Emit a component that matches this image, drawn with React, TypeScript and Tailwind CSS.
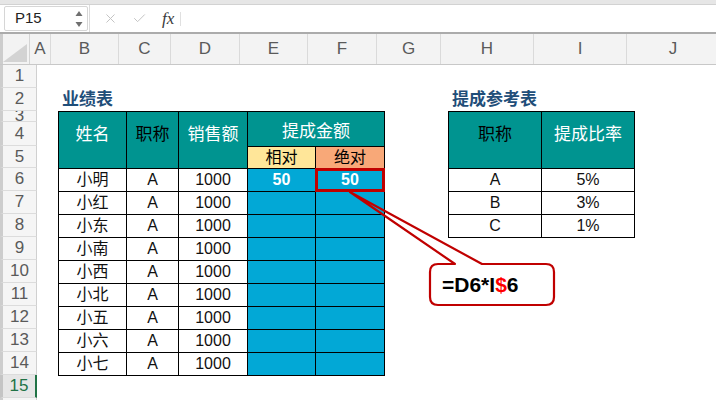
import { X, Check } from "lucide-react";
import { Fragment } from "react";

const font = { fontFamily: '"Liberation Sans", "Noto Sans CJK SC", sans-serif' };

const colHeads = [
  { label: "A", w: "w-[21px]" },
  { label: "B", w: "w-[68px]" },
  { label: "C", w: "w-[52px]" },
  { label: "D", w: "w-[69px]" },
  { label: "E", w: "w-[68px]" },
  { label: "F", w: "w-[69px]" },
  { label: "G", w: "w-[64px]" },
  { label: "H", w: "w-[93px]" },
  { label: "I", w: "w-[93px]" },
  { label: "J", w: "w-[93px]" },
];

const rowHeads = [
  { n: 1, h: "h-[23px]" },
  { n: 2, h: "h-[23px]" },
  { n: 3, h: "h-[11px]" },
  { n: 4, h: "h-[24px]" },
  { n: 5, h: "h-[22px]" },
  { n: 6, h: "h-[23px]" },
  { n: 7, h: "h-[23px]" },
  { n: 8, h: "h-[23px]" },
  { n: 9, h: "h-[23px]" },
  { n: 10, h: "h-[23px]" },
  { n: 11, h: "h-[23px]" },
  { n: 12, h: "h-[23px]" },
  { n: 13, h: "h-[23px]" },
  { n: 14, h: "h-[23px]" },
];

const names = ["小明", "小红", "小东", "小南", "小西", "小北", "小五", "小六", "小七"];

const rates = [
  { t: "A", r: "5%" },
  { t: "B", r: "3%" },
  { t: "C", r: "1%" },
];

export default function App() {
  return (
    <div className="relative w-[716px] h-[400px] overflow-hidden bg-white" style={font}>
      {/* ribbon edge */}
      <div className="h-[5px] bg-[#e6e6e6] border-b border-[#d2d2d2]"></div>

      {/* formula bar */}
      <div className="h-[27px] bg-white flex items-center">
        <div className="ml-[4px] w-[84px] h-[25px] border border-[#d6d6d6] rounded-[2px] flex items-center justify-between pl-[10px] pr-[4px]">
          <span className="text-[15px] text-[#222]">P15</span>
          <svg width="8" height="18" viewBox="0 0 8 18">
            <polygon points="4,1 7.5,6 0.5,6" fill="#6f6f6f" />
            <polygon points="0.5,12 7.5,12 4,17" fill="#6f6f6f" />
          </svg>
        </div>
        <div className="w-px h-[27px] bg-[#dcdcdc] ml-[1px]"></div>
        <X className="ml-[13px] w-[15px] h-[15px] text-[#c4c4c4]" strokeWidth={1.6} />
        <Check className="ml-[14px] w-[15px] h-[15px] text-[#c4c4c4]" strokeWidth={1.6} />
        <span
          className="ml-[15px] text-[17px] italic text-[#3a3a3a]"
          style={{ fontFamily: '"Liberation Serif", serif' }}
        >
          fx
        </span>
        <div className="ml-[6px] w-px h-[14px] bg-[#e0e0e0]"></div>
      </div>
      <div className="h-[2px] bg-[#ababab]"></div>

      {/* column headers */}
      <div className="flex h-[31px] bg-[#f3f3f3] border-b border-[#c8c8c8]">
        <div className="w-[37px] h-full border-r border-[#d4d4d4] border-l-[3px] border-l-[#cdcdcd] flex items-end justify-end pb-[2px] pr-[2px]">
          <svg width="24" height="18" viewBox="0 0 24 18">
            <polygon points="24,0 24,18 0,18" fill="#d3d3d3" />
          </svg>
        </div>
        {colHeads.map((c) => (
          <div
            key={c.label}
            className={`${c.w} shrink-0 h-full border-r border-[#dadada] flex items-center justify-center text-[17px] text-[#5a5a5a]`}
          >
            {c.label}
          </div>
        ))}
      </div>

      {/* body */}
      <div className="flex">
        <div className="w-[37px] shrink-0 flex flex-col bg-[#f5f5f5]">
          {rowHeads.map((r) => (
            <div
              key={r.n}
              className={`${r.h} overflow-hidden border-b border-[#dcdcdc] border-r border-r-[#d0d0d0] border-l-[3px] border-l-[#cdcdcd] flex items-center justify-center text-[17px] text-[#5a5a5a]`}
            >
              {r.n}
            </div>
          ))}
          <div className="h-[23px] border-b border-[#dcdcdc] border-r-2 border-r-[#217346] border-l-[3px] border-l-[#c4c4c4] bg-[#e6e6e6] flex items-center justify-center text-[17px] text-[#217346]">
            15
          </div>
          <div className="h-[23px] border-r border-r-[#d0d0d0] border-l-[3px] border-l-[#cdcdcd]"></div>
        </div>

        <div className="flex-1 flex flex-col pl-[21px]">
          <div className="h-[23px]"></div>
          <div className="h-[23px] flex items-center text-[17px] font-bold text-[#1f4e79]">
            <div className="w-[390px] pl-[4px]">业绩表</div>
            <div className="pl-[4px]">提成参考表</div>
          </div>

          <div className="flex items-start">
            {/* performance table */}
            <div className="grid grid-cols-[67px_51px_68px_67px_68px] grid-rows-[10px_23px_21px_repeat(9,22px)] gap-px p-px bg-black w-[327px] text-[16px]">
              <div className="row-span-3 bg-[#009490] text-white text-[17px] flex items-center justify-center pb-[10px]">姓名</div>
              <div className="row-span-3 bg-[#009490] text-black text-[17px] flex items-center justify-center pb-[10px]">职称</div>
              <div className="row-span-3 bg-[#009490] text-white text-[17px] flex items-center justify-center pb-[10px]">销售额</div>
              <div className="col-span-2 row-span-2 bg-[#009490] text-white text-[17px] flex items-end justify-center pb-[2px]">提成金额</div>
              <div className="bg-[#ffe699] text-black flex items-center justify-center">相对</div>
              <div className="bg-[#f8a878] text-black flex items-center justify-center">绝对</div>

              {names.map((n, i) => (
                <Fragment key={n}>
                  <div className="bg-white text-[#111] flex items-center justify-center">{n}</div>
                  <div className="bg-white text-[#111] flex items-center justify-center">A</div>
                  <div className="bg-white text-[#111] flex items-center justify-center">1000</div>
                  <div className="bg-[#02a8d6] text-white font-bold flex items-center justify-center">
                    {i === 0 ? "50" : ""}
                  </div>
                  <div className="relative bg-[#02a8d6] text-white font-bold flex items-center justify-center">
                    {i === 0 ? "50" : ""}
                    {i === 0 && (
                      <div className="absolute -top-px -left-px -right-px -bottom-px border-[3px] border-[#c00000]"></div>
                    )}
                  </div>
                </Fragment>
              ))}
            </div>

            {/* rate table */}
            <div className="ml-[63px] grid grid-cols-[92px_92px] grid-rows-[10px_23px_21px_repeat(3,22px)] gap-px p-px bg-black w-[187px] text-[16px]">
              <div className="row-span-3 bg-[#009490] text-black text-[17px] flex items-center justify-center pb-[10px]">职称</div>
              <div className="row-span-3 bg-[#009490] text-white text-[17px] flex items-center justify-center pb-[10px]">提成比率</div>
              {rates.map((r) => (
                <Fragment key={r.t}>
                  <div className="bg-white text-[#111] flex items-center justify-center">{r.t}</div>
                  <div className="bg-white text-[#111] flex items-center justify-center">{r.r}</div>
                </Fragment>
              ))}
            </div>
          </div>
        </div>
      </div>

      {/* callout */}
      <div className="absolute left-[345px] top-[188px] w-[215px] h-[122px]">
        <svg width="215" height="122" viewBox="0 0 215 122" className="absolute inset-0">
          <rect x="85" y="76" width="124" height="41" rx="8" fill="white" />
          <path
            d="M 93 76 L 110 76 L 5 4 L 137 76 L 201 76 Q 209 76 209 84 L 209 109 Q 209 117 201 117 L 93 117 Q 85 117 85 109 L 85 84 Q 85 76 93 76 Z"
            fill="none"
            stroke="#c00000"
            strokeWidth="2.2"
            strokeLinejoin="round"
          />
        </svg>
        <div className="absolute left-[97px] top-[76px] h-[41px] flex items-center text-[21px] font-bold text-black">
          =D6*I<span className="text-[#ff0000]">$</span>6
        </div>
      </div>
    </div>
  );
}
